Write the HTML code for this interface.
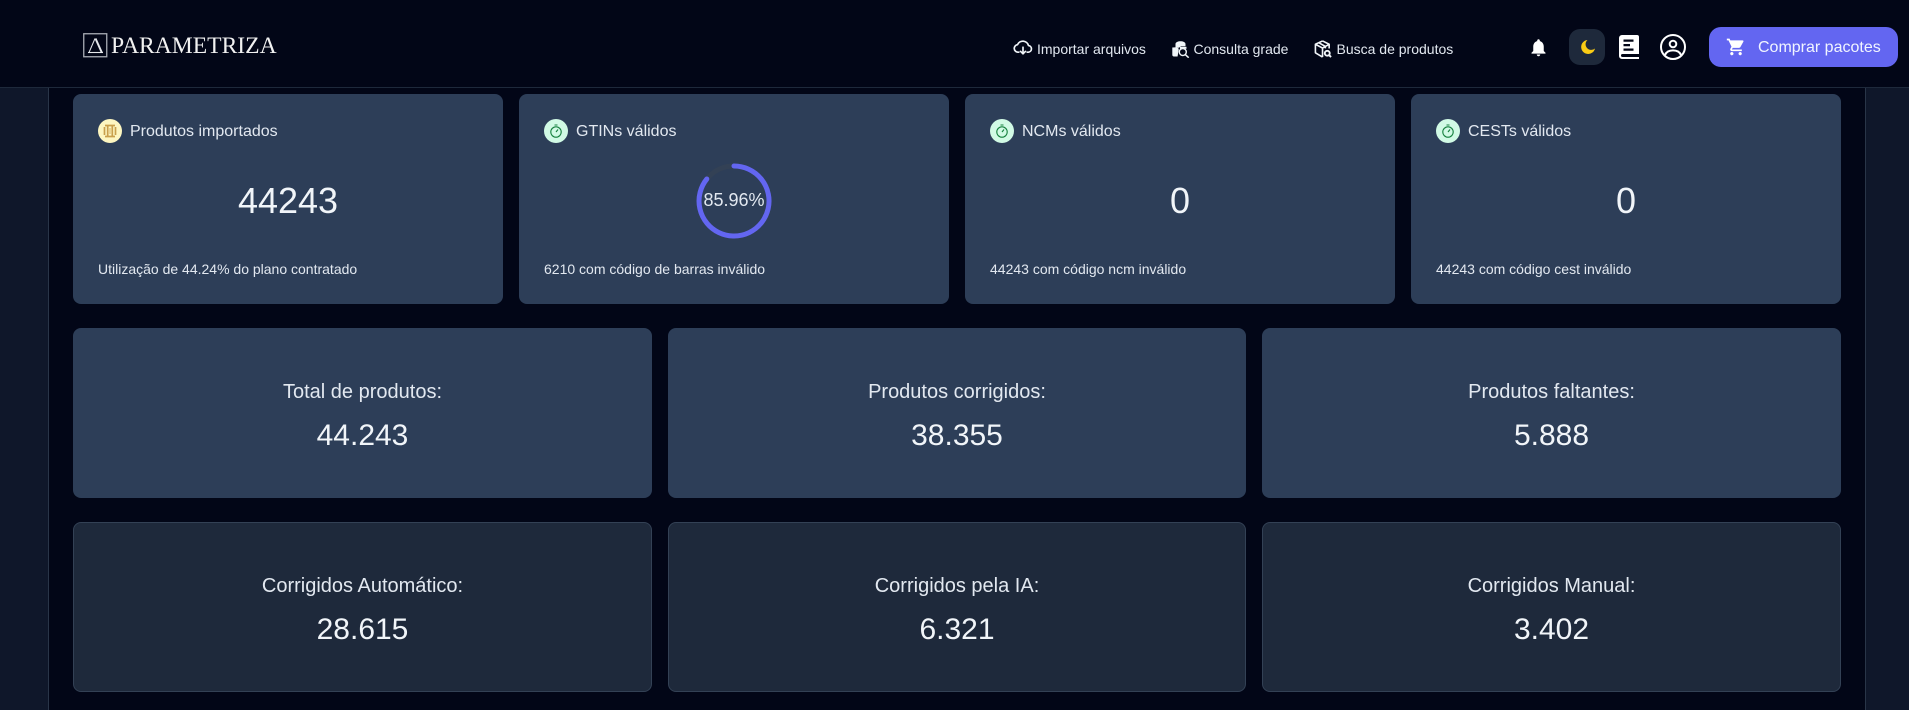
<!DOCTYPE html>
<html lang="pt">
<head>
<meta charset="utf-8">
<title>Parametriza</title>
<style>
*{box-sizing:border-box;margin:0;padding:0}
html,body{width:1909px;height:710px;overflow:hidden;background:#020617;font-family:"Liberation Sans",sans-serif;color:#fff}
body{position:relative}
.abs{position:absolute}
.side{position:absolute;top:87px;bottom:0;width:49px;background:#0f172a}
.t{position:absolute;white-space:nowrap;line-height:1}
.card{position:absolute;background:#2d3e58;border-radius:8px}
.card2{position:absolute;background:#1e293b;border:1px solid #334155;border-radius:8px}
.ttl{position:absolute;left:57px;top:29px;font-size:16px;line-height:18px;color:#e2e8f0;white-space:nowrap}
.ic{position:absolute;left:25px;top:25px;width:24px;height:24px;border-radius:50%}
.big{position:absolute;left:0;right:0;top:87px;text-align:center;font-size:36px;line-height:40px;color:#f1f5f9}
.cap{position:absolute;left:25px;top:167px;font-size:14px;line-height:16px;color:#e2e8f0;white-space:nowrap}
.lab{position:absolute;left:0;right:0;text-align:center;font-size:20px;line-height:24px;color:#e2e8f0}
.val{position:absolute;left:0;right:0;text-align:center;font-size:30px;line-height:34px;color:#f1f5f9}
.nav{position:absolute;top:41px;font-size:14px;line-height:16px;color:#e2e8f0;white-space:nowrap}
svg{position:absolute;display:block}
</style>
</head>
<body>
<div class="side" style="left:0;border-right:1px solid #293548"></div>
<div class="side" style="left:1865px;width:44px;border-left:1px solid #293548"></div>

<div class="abs" style="left:0;top:0;width:1909px;height:88px;background:#020617;border-bottom:1px solid #1e293b"></div>

<svg style="left:83px;top:33px" width="25" height="25" viewBox="0 0 25 25" fill="none" stroke="#a8acb5"><rect x=".75" y=".75" width="23" height="23" stroke-width="1.300"/><path d="M6 19.500L12 5.500" stroke="#e5e7eb" stroke-width="1"/><path d="M12.500 5.500L18.800 19.500" stroke="#e5e7eb" stroke-width="2"/><path d="M5 19.500h15" stroke="#e5e7eb" stroke-width="1.100"/></svg>
<div class="t" style="left:111px;top:33px;font-family:'Liberation Serif',serif;font-size:23.600px;line-height:27px;color:#f1f1f1">PARAMETRIZA</div>

<svg style="left:1013px;top:37.500px" width="20" height="20" viewBox="0 0 24 24" fill="none" stroke="#f1f5f9" stroke-width="2" stroke-linecap="round" stroke-linejoin="round"><path d="M7 17H6a4.500 4.500 0 0 1-.6-8.960A7 7 0 0 1 18.600 9.040 4 4 0 0 1 18.500 17H17M12 11v8M9 16l3 3 3-3"/></svg>
<div class="nav" style="left:1037px">Importar arquivos</div>

<svg style="left:1172px;top:41px" width="18" height="17" viewBox="0 0 18 17"><path d="M3.500 3C3.500 1.300 6 .3 8.500.3s5 1 5 2.700v2.200H9l-2 1.500H3.500z" fill="#f1f5f9"/><path d="M.3 6.500l4.500-.2 2 1.500-1.200 7.700H2a1.700 1.700 0 0 1-1.700-1.700z" fill="#f1f5f9"/><path d="M8 5.800h6.500v2H8z" fill="#f1f5f9"/><circle cx="10.800" cy="11" r="3.500" fill="none" stroke="#f1f5f9" stroke-width="1.400"/><path d="M13.400 13.700l3.300 3" stroke="#f1f5f9" stroke-width="1.500"/></svg>
<div class="nav" style="left:1193.500px">Consulta grade</div>

<svg style="left:1314px;top:40px" width="18" height="18" viewBox="0 0 19 19" fill="none" stroke="#f1f5f9" stroke-width="1.700" stroke-linejoin="round"><path d="M9 1L1.500 4.500v9L9 18M9 1l7 3.500V9M1.500 4.500L9 8.500l7-4M9 8.500V18M5 2.800l7 4v2"/><circle cx="14" cy="14" r="2.600" stroke-width="2"/><path d="M16 16l2 2" stroke-width="2"/></svg>
<div class="nav" style="left:1336.500px">Busca de produtos</div>

<svg style="left:1527.500px;top:36.500px" width="21" height="21" viewBox="0 0 24 24" fill="#fff"><path d="M12 22c1.100 0 2-.9 2-2h-4c0 1.100.89 2 2 2zm6-6v-5c0-3.070-1.640-5.640-4.500-6.320V4c0-.83-.67-1.500-1.500-1.500s-1.500.67-1.500 1.500v.68C7.630 5.360 6 7.920 6 11v5l-2 2v1h16v-1l-2-2z"/></svg>

<div class="abs" style="left:1569px;top:29px;width:36px;height:36px;border-radius:11px;background:#1e293b"></div>
<svg style="left:1579px;top:38px" width="18" height="18" viewBox="0 0 18 18"><path d="M8.500 2A7 7 0 1 0 16 10.500 5 5 0 0 1 8.500 2z" fill="#facc15"/></svg>

<svg style="left:1619px;top:35px" width="20" height="24" viewBox="0 0 20 24"><path d="M3 0h15a2 2 0 0 1 2 2v17H3.500a1.500 1.500 0 0 0 0 3H20v2H3a3 3 0 0 1-3-3V3a3 3 0 0 1 3-3z" fill="#fff"/><path d="M4.500 4.500h10v2.200h-10zM4.500 9h6.500v2.200H4.500zM4.500 13.500h10v2.200h-10z" fill="#020617"/></svg>

<svg style="left:1659px;top:33px" width="28" height="28" viewBox="0 0 28 28" fill="none" stroke="#fff" stroke-width="2"><circle cx="14" cy="14" r="12"/><circle cx="14" cy="11" r="3.300"/><path d="M6 22c1.500-3.500 4.500-4.600 8-4.600s6.500 1.100 8 4.600"/></svg>

<div class="abs" style="left:1709px;top:27px;width:189px;height:40px;border-radius:12px;background:#6366f1"></div>
<svg style="left:1726px;top:37px" width="20" height="20" viewBox="0 0 24 24" fill="#fff"><path d="M7 18c-1.100 0-1.990.9-1.990 2S5.900 22 7 22s2-.9 2-2-.9-2-2-2zM1 2v2h2l3.600 7.590-1.350 2.450c-.16.28-.25.61-.25.96 0 1.100.9 2 2 2h12v-2H7.420c-.14 0-.25-.11-.25-.25l.03-.12.9-1.630h7.450c.75 0 1.410-.41 1.750-1.030l3.580-6.490c.08-.14.12-.31.12-.48 0-.55-.45-1-1-1H5.210l-.94-2H1zm16 16c-1.100 0-1.990.9-1.990 2s.89 2 1.990 2 2-.9 2-2-.9-2-2-2z"/></svg>
<div class="t" style="left:1758px;top:39px;font-size:16px;line-height:18px;color:#f1f5ff">Comprar pacotes</div>

<!-- Row 1 -->
<div class="card" style="left:73px;top:94px;width:430px;height:210px">
  <div class="ic" style="background:#fdf6c0"></div>
  <svg style="left:30px;top:30px" width="14" height="14" viewBox="0 0 14 14" fill="none" stroke="#c9a04c" stroke-width="1.700"><path d="M2 1.500h10M2 12.500h10M1.500 3v8M4.700 1.500v11M9.300 1.500v11M12.500 3v8"/><path d="M7 4v6" stroke-width="1" stroke="#d9b565"/></svg>
  <div class="ttl">Produtos importados</div>
  <div class="big">44243</div>
  <div class="cap">Utilização de 44.24% do plano contratado</div>
</div>
<div class="card" style="left:519px;top:94px;width:430px;height:210px">
  <div class="ic" style="background:#d1fae5"></div>
  <svg style="left:30px;top:30px" width="14" height="14" viewBox="0 0 14 14" fill="none" stroke="#15803d" stroke-width="1.100"><circle cx="7" cy="8" r="5.200"/><path d="M5.500 1h3M7 8l2-2.500"/></svg>
  <div class="ttl">GTINs válidos</div>
  <svg style="left:177px;top:69px" width="76" height="76" viewBox="0 0 76 76" fill="none"><circle cx="38" cy="38" r="35" stroke="#334155" stroke-width="5"/><path d="M38 3A35 35 0 1 1 10.800 16" stroke="#6366f1" stroke-width="5" stroke-linecap="round"/></svg>
  <div class="big" style="top:95px;left:0;right:0;font-size:18px;line-height:22px;color:#e2e8f0;padding-left:0">85.96%</div>
  <div class="cap">6210 com código de barras inválido</div>
</div>
<div class="card" style="left:965px;top:94px;width:430px;height:210px">
  <div class="ic" style="background:#d1fae5"></div>
  <svg style="left:30px;top:30px" width="14" height="14" viewBox="0 0 14 14" fill="none" stroke="#15803d" stroke-width="1.100"><circle cx="7" cy="8" r="5.200"/><path d="M5.500 1h3M7 8l2-2.500"/></svg>
  <div class="ttl">NCMs válidos</div>
  <div class="big">0</div>
  <div class="cap">44243 com código ncm inválido</div>
</div>
<div class="card" style="left:1411px;top:94px;width:430px;height:210px">
  <div class="ic" style="background:#d1fae5"></div>
  <svg style="left:30px;top:30px" width="14" height="14" viewBox="0 0 14 14" fill="none" stroke="#15803d" stroke-width="1.100"><circle cx="7" cy="8" r="5.200"/><path d="M5.500 1h3M7 8l2-2.500"/></svg>
  <div class="ttl">CESTs válidos</div>
  <div class="big">0</div>
  <div class="cap">44243 com código cest inválido</div>
</div>

<!-- Row 2 -->
<div class="card" style="left:73px;top:328px;width:579px;height:170px"><div class="lab" style="top:52px">Total de produtos:</div><div class="val" style="top:91px">44.243</div></div>
<div class="card" style="left:668px;top:328px;width:578px;height:170px"><div class="lab" style="top:52px">Produtos corrigidos:</div><div class="val" style="top:91px">38.355</div></div>
<div class="card" style="left:1262px;top:328px;width:579px;height:170px"><div class="lab" style="top:52px">Produtos faltantes:</div><div class="val" style="top:91px">5.888</div></div>

<!-- Row 3 -->
<div class="card2" style="left:73px;top:522px;width:579px;height:170px"><div class="lab" style="top:51px">Corrigidos Automático:</div><div class="val" style="top:90px">28.615</div></div>
<div class="card2" style="left:668px;top:522px;width:578px;height:170px"><div class="lab" style="top:51px">Corrigidos pela IA:</div><div class="val" style="top:90px">6.321</div></div>
<div class="card2" style="left:1262px;top:522px;width:579px;height:170px"><div class="lab" style="top:51px">Corrigidos Manual:</div><div class="val" style="top:90px">3.402</div></div>
</body>
</html>
